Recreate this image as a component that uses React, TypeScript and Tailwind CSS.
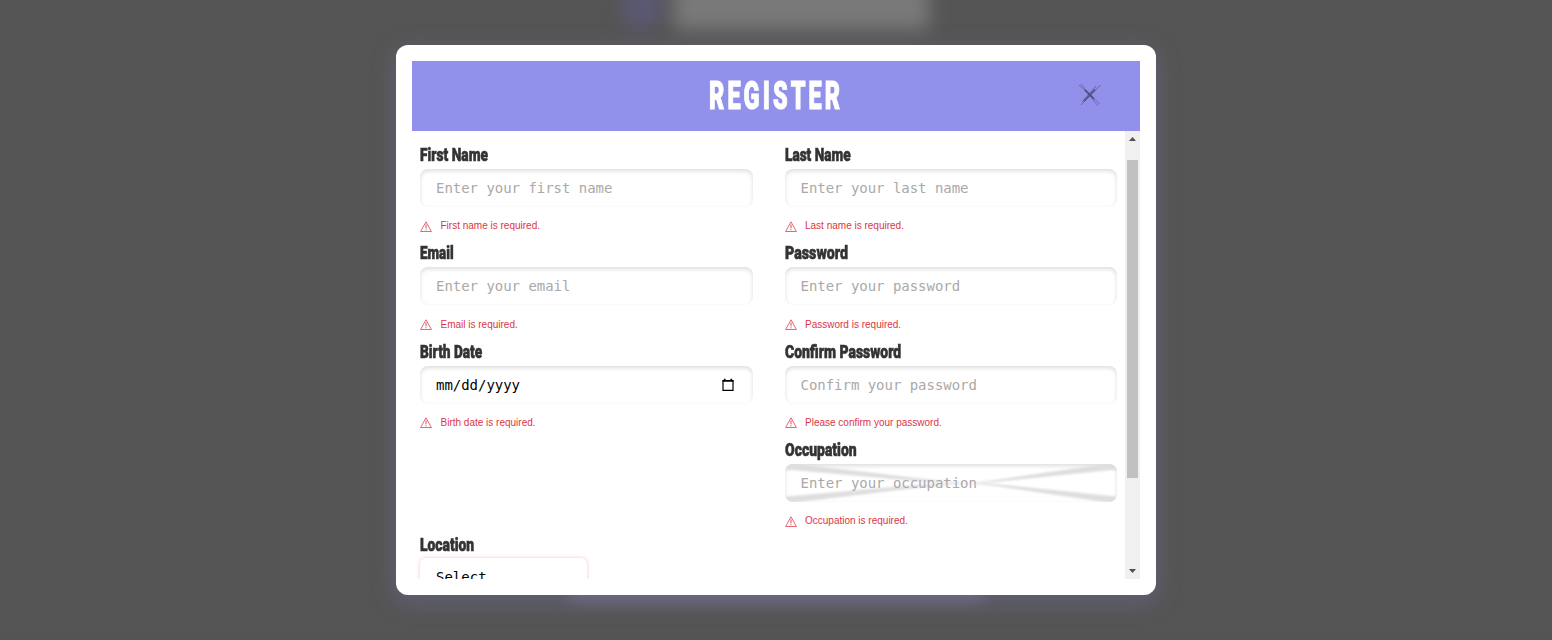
import { useLayoutEffect, useRef } from "react";
import type { ReactNode } from "react";

function Condensed({ text, width, className }: { text: string; width: number; className: string }) {
  const ref = useRef<HTMLSpanElement>(null);
  useLayoutEffect(() => {
    const el = ref.current;
    if (el) el.style.transform = `scaleX(${width / el.offsetWidth})`;
  }, [width]);
  return (
    <span className="block" style={{ width }}>
      <span ref={ref} className={`block w-max origin-left whitespace-nowrap font-['Roboto',sans-serif] font-black ${className}`}>
        {text}
      </span>
    </span>
  );
}

function Label({ text, width }: { text: string; width: number }) {
  return (
    <label className="block h-5">
      <Condensed text={text} width={width} className="text-[19px] leading-[20px] text-[#333] [-webkit-text-stroke:0.6px_#333]" />
    </label>
  );
}

function Warning() {
  return (
    <svg className="mt-px h-[11px] w-3 shrink-0" viewBox="0 0 12 11" fill="none" stroke="#dc3545" strokeWidth="0.75">
      <path d="M6 .8 11.4 10.5H.6Z" />
      <path d="M6 3.4v4M6 8.3v1" strokeWidth="0.9" />
    </svg>
  );
}

function Field({ label, width, error, children }: { label: string; width: number; error: string; children: ReactNode }) {
  return (
    <div className="h-[98.33px]">
      <Label text={label} width={width} />
      <div className="relative mt-1 flex h-[38px] items-center overflow-hidden rounded-lg px-4 font-['DejaVu_Sans_Mono',monospace] text-sm tracking-[-0.03px] text-[#a9a9a9] shadow-[inset_0_2px_4px_rgba(0,0,0,0.14)]">
        {children}
      </div>
      <div className="mt-[8.7px] flex h-5 items-center gap-[8.5px] font-['Liberation_Sans',sans-serif] text-[10px] text-[#dc3545]">
        <Warning />
        <span>{error}</span>
      </div>
    </div>
  );
}

function Cross() {
  return (
    <svg className="absolute inset-0 size-full" viewBox="0 0 332 38" preserveAspectRatio="none">
      <defs>
        <filter id="soft" x="-5%" y="-20%" width="110%" height="140%">
          <feGaussianBlur stdDeviation="1.3" />
        </filter>
      </defs>
      <g fill="#dedede" filter="url(#soft)">
        <path d="M-4-2 14 0 140 15 190 20 130 17 -4 5Z" />
        <path d="M-4 40 14 38 140 23 190 19 130 21 -4 33Z" />
        <path d="M336-2 318 0 210 16 180 20 210 18 336 5Z" />
        <path d="M336 40 318 38 210 22 180 19 210 20 336 33Z" />
      </g>
    </svg>
  );
}

export default function App() {
  return (
    <div className="relative flex h-[640px] w-full items-center justify-center overflow-hidden bg-[#555]">
      <div className="absolute -top-8 left-[622px] flex items-end gap-3 blur-[9px]">
        <div className="h-[60px] w-10 rounded-full bg-[#5b5873]" />
        <div className="h-[62px] w-[255px] bg-[#797979]" />
      </div>
      <div className="absolute top-[580px] left-[570px] h-6 w-[412px] bg-[#777487]/50 blur-[7px]" />
      <div className="absolute bottom-0 left-0 h-[3px] w-full bg-[#575355]" />
      <div className="relative flex h-[550px] w-[760px] flex-col rounded-xl bg-white p-4 shadow-[0_6px_24px_rgba(124,120,190,0.35)]">
        <header className="relative flex h-[70px] shrink-0 items-center justify-center bg-[#9190ea]">
          <h1>
            <Condensed text="REGISTER" width={134} className="text-[38px] leading-[68px] tracking-[5px] text-white [-webkit-text-stroke:1.1px_#fff]" />
          </h1>
          <svg className="absolute top-[22px] right-[38px] size-6" viewBox="0 0 24 24" fill="none" stroke="#4a4875">
            <path d="M1 2 22 21M3 1 20 23" strokeWidth="1" strokeOpacity=".5" />
            <path d="M22.500 2 3 22M18 3 4 19" strokeWidth="1" strokeOpacity=".6" />
            <path d="M7 7 16 16M17 6.500 6 18" strokeWidth="1.8" strokeOpacity=".8" />
          </svg>
        </header>
        <div className="flex min-h-0 flex-1">
          <div className="flex-1 overflow-hidden px-2 pt-[14px]">
            <div className="grid grid-cols-2 gap-x-8">
              <Field label="First Name" width={68} error="First name is required.">Enter your first name</Field>
              <Field label="Last Name" width={66} error="Last name is required.">Enter your last name</Field>
              <Field label="Email" width={34} error="Email is required.">Enter your email</Field>
              <Field label="Password" width={63} error="Password is required.">Enter your password</Field>
              <Field label="Birth Date" width={62} error="Birth date is required.">
                <span className="flex-1 text-black">mm/dd/yyyy</span>
                <svg className="mr-[2px] size-[14px]" viewBox="0 0 14 14" fill="none" stroke="#000">
                  <path d="M2 2.5h10v9.8H2z" strokeWidth="1.2" />
                  <path d="M1.5 3h11M3.7 .8v2M10.300 .8v2" strokeWidth="1.7" />
                </svg>
              </Field>
              <Field label="Confirm Password" width={116} error="Please confirm your password.">Confirm your password</Field>
              <div />
              <Field label="Occupation" width={72} error="Occupation is required.">
                <Cross />
                <span className="relative">Enter your occupation</span>
              </Field>
            </div>
            <div className="-mt-[3px]">
              <Label text="Location" width={54} />
              <div className="mt-[3px] h-10 w-[167px] rounded-md bg-white px-4 pt-[10px] font-['DejaVu_Sans_Mono',monospace] text-sm leading-[18px] text-black shadow-[0_0_4px_rgba(220,53,69,0.3)]">
                Select
              </div>
            </div>
          </div>
          <div className="flex w-[15px] flex-col items-center bg-[#f0f0f0]">
            <svg className="mt-[5px] h-[6px] w-[7px] shrink-0" viewBox="0 0 7 6" fill="#505050"><path d="M0 5h7L3.500 1Z" /></svg>
            <div className="mt-[18px] h-[318px] w-[11px] shrink-0 bg-[#c1c1c1]" />
            <svg className="mt-auto mb-[5px] h-[6px] w-[7px] shrink-0" viewBox="0 0 7 6" fill="#505050"><path d="M0 1h7L3.500 5Z" /></svg>
          </div>
        </div>
      </div>
    </div>
  );
}
